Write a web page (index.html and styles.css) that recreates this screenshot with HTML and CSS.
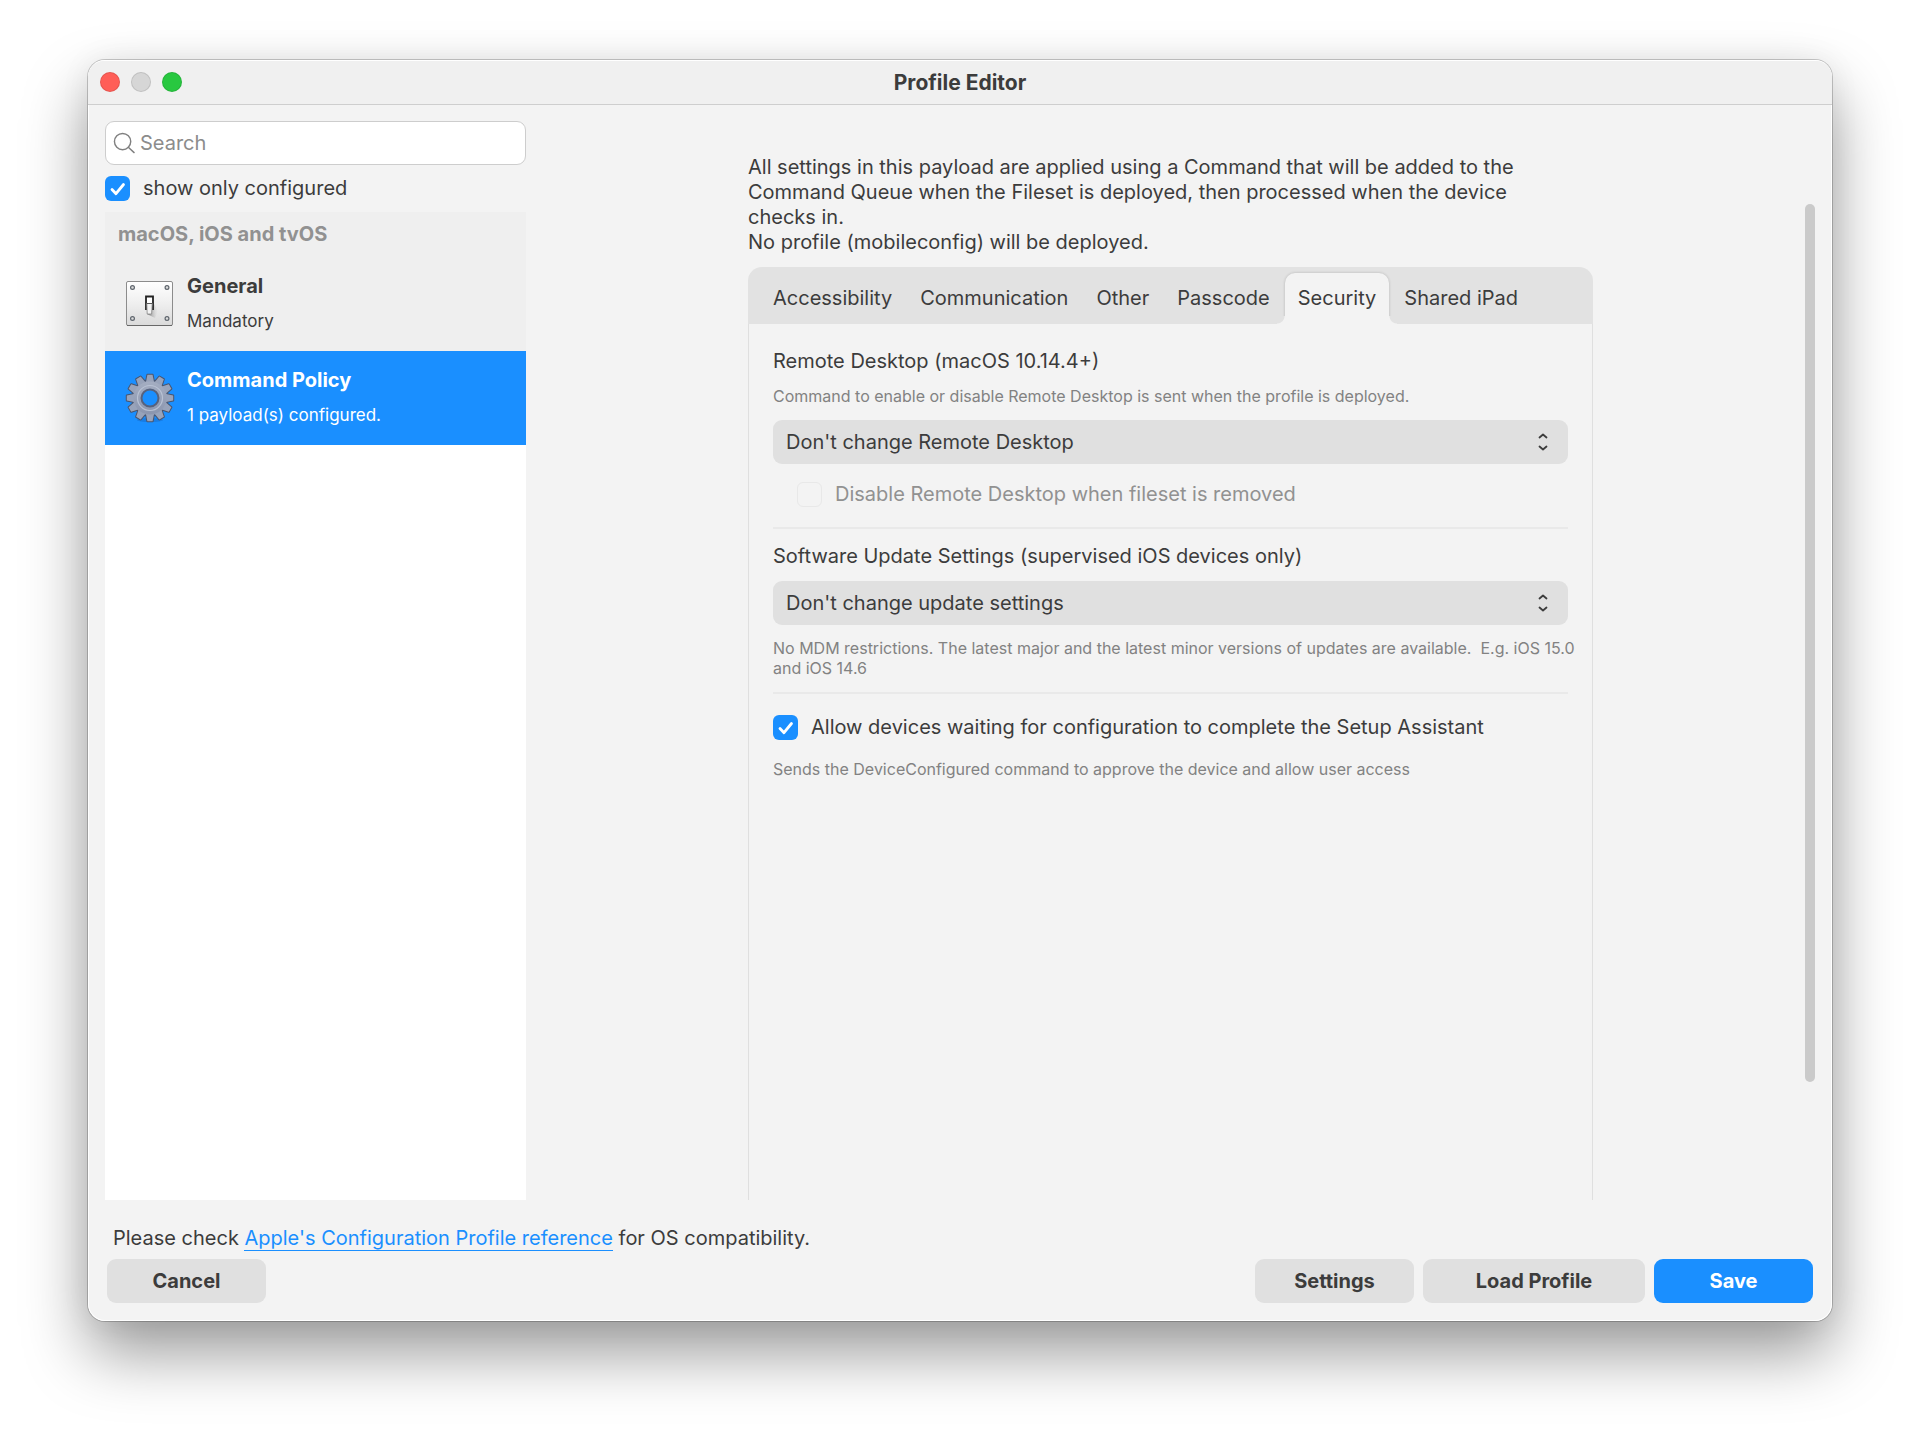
FILE: index.html
```html
<!DOCTYPE html>
<html lang="en">
<head>
<meta charset="utf-8">
<meta name="viewport" content="width=device-width, initial-scale=1">
<title>Profile Editor</title>
<link rel="stylesheet" href="styles.css">
</head>
<body>
<div class="window">
  <header class="titlebar">
    <div class="lights">
      <button class="light light-close" type="button" aria-label="Close"></button>
      <button class="light light-min" type="button" aria-label="Minimize" disabled></button>
      <button class="light light-zoom" type="button" aria-label="Zoom"></button>
    </div>
    <h1 class="title">Profile Editor</h1>
  </header>

  <div class="body">
    <aside class="sidebar">
      <div class="search">
        <svg class="search-icon" viewBox="0 0 24 24" aria-hidden="true"><circle cx="10" cy="10" r="8.500"/><path d="M16 16l6 5.500"/></svg>
        <input class="search-input" type="search" placeholder="Search" aria-label="Search">
      </div>
      <label class="check"><input class="checkbox" type="checkbox" checked><span>show only configured</span></label>
      <div class="list">
        <h2 class="group">macOS, iOS and tvOS</h2>
        <ul class="items">
          <li class="item">
            <svg class="item-icon" viewBox="0 0 50 50" aria-hidden="true">
              <defs>
                <linearGradient id="plate" x1="0" y1="0" x2="0" y2="1"><stop offset="0" stop-color="#fff"/><stop offset=".5" stop-color="#efefef"/><stop offset="1" stop-color="#dadada"/></linearGradient>
                <linearGradient id="shade" x1="0" y1="0" x2="1" y2="0"><stop offset="0" stop-color="#666"/><stop offset="1" stop-color="#ccc" stop-opacity="0"/></linearGradient>
              </defs>
              <rect x="1.500" y="2.500" width="46" height="44" rx="1.500" fill="url(#plate)" stroke="#8c8c8c"/>
              <path d="M2 46.500h45" stroke="#686868"/>
              <path d="M22 35l6-12 5 9-3 7z" fill="url(#shade)"/>
              <path d="M21 31V17.500h7V31" fill="#fff" stroke="#222" stroke-width="1.800"/>
              <path d="M21.800 24.500h5.400l-.6 10.500h-4.400z" fill="#f2f2f2" stroke="#888" stroke-width=".8"/>
              <path d="M22 24.500h5" stroke="#555"/>
              <g fill="#ddd" stroke="#5d646c" stroke-width="1.200"><circle cx="7.500" cy="8.500" r="1.900"/><circle cx="42" cy="8.500" r="1.900"/><circle cx="7.500" cy="39.500" r="1.900"/><circle cx="42" cy="39.500" r="1.900"/></g>
            </svg>
            <div class="item-text"><strong class="item-name">General</strong><span class="item-note">Mandatory</span></div>
          </li>
          <li class="item item-selected" aria-current="true">
            <svg class="item-icon" viewBox="0 0 50 50" aria-hidden="true">
              <defs>
                <linearGradient id="metal" gradientUnits="userSpaceOnUse" x1="0" y1="-24" x2="0" y2="24"><stop offset="0" stop-color="#aab3c6"/><stop offset="1" stop-color="#8590aa"/></linearGradient>
                <path id="tooth" d="M-4-16L-2.600-23.200H2.600L4-16z"/>
                <g id="gear">
                  <circle r="17"/>
                  <use href="#tooth"/><use href="#tooth" transform="rotate(30)"/><use href="#tooth" transform="rotate(60)"/><use href="#tooth" transform="rotate(90)"/>
                  <use href="#tooth" transform="rotate(120)"/><use href="#tooth" transform="rotate(150)"/><use href="#tooth" transform="rotate(180)"/><use href="#tooth" transform="rotate(210)"/>
                  <use href="#tooth" transform="rotate(240)"/><use href="#tooth" transform="rotate(270)"/><use href="#tooth" transform="rotate(300)"/><use href="#tooth" transform="rotate(330)"/>
                </g>
              </defs>
              <ellipse cx="25" cy="47" rx="13" ry="2" fill="#1569c7" opacity=".5"/>
              <g transform="translate(25 25)">
                <use href="#gear" fill="#4a546c" stroke="#4a546c" stroke-width="2" stroke-linejoin="round"/>
                <use href="#gear" fill="#98a3ba"/>
                <circle r="16.500" fill="url(#metal)"/>
                <circle r="12.500" fill="none" stroke="#b9c2d4" stroke-width="1.200"/>
                <circle r="8.500" fill="#1a8fff" stroke="#56627e" stroke-width="2"/>
              </g>
            </svg>
            <div class="item-text"><strong class="item-name">Command Policy</strong><span class="item-note">1 payload(s) configured.</span></div>
          </li>
        </ul>
      </div>
    </aside>

    <main class="main">
      <div class="payload">
        <p class="intro">All settings in this payload are applied using a Command that will be added to the Command Queue when the Fileset is deployed, then processed when the device checks in.<br>No profile (mobileconfig) will be deployed.</p>
        <div class="tabs" role="tablist">
          <button class="tab" type="button" role="tab">Accessibility</button>
          <button class="tab" type="button" role="tab">Communication</button>
          <button class="tab" type="button" role="tab">Other</button>
          <button class="tab" type="button" role="tab">Passcode</button>
          <button class="tab tab-active" type="button" role="tab" aria-selected="true">Security</button>
          <button class="tab" type="button" role="tab">Shared iPad</button>
        </div>
        <div class="panel" role="tabpanel">
          <section class="section">
            <label class="label" for="remote">Remote Desktop (macOS 10.14.4+)</label>
            <p class="hint">Command to enable or disable Remote Desktop is sent when the profile is deployed.</p>
            <div class="select-wrap">
              <select class="select" id="remote"><option>Don't change Remote Desktop</option></select>
              <svg class="chevrons" viewBox="0 0 10 18" aria-hidden="true"><path d="M1.500 4.500l3.500-3 3.500 3M1.500 13.500l3.500 3 3.500-3"/></svg>
            </div>
            <label class="check check-disabled"><input class="checkbox" type="checkbox" disabled><span>Disable Remote Desktop when fileset is removed</span></label>
          </section>
          <section class="section">
            <label class="label" for="updates">Software Update Settings (supervised iOS devices only)</label>
            <div class="select-wrap">
              <select class="select" id="updates"><option>Don't change update settings</option></select>
              <svg class="chevrons" viewBox="0 0 10 18" aria-hidden="true"><path d="M1.500 4.500l3.500-3 3.500 3M1.500 13.500l3.500 3 3.500-3"/></svg>
            </div>
            <p class="hint hint-after">No MDM restrictions. The latest major and the latest minor versions of updates are available.&nbsp; E.g. iOS 15.0 and iOS 14.6</p>
          </section>
          <section class="section section-setup">
            <label class="check"><input class="checkbox" type="checkbox" checked><span>Allow devices waiting for configuration to complete the Setup Assistant</span></label>
            <p class="hint">Sends the DeviceConfigured command to approve the device and allow user access</p>
          </section>
        </div>
      </div>
      <div class="scrollbar"></div>
    </main>
  </div>

  <footer class="footer">
    <p class="note">Please check <a class="link" href="#reference">Apple's Configuration Profile reference</a> for OS compatibility.</p>
    <div class="actions">
      <button class="button button-cancel" type="button">Cancel</button>
      <button class="button" type="button">Settings</button>
      <button class="button button-wide" type="button">Load Profile</button>
      <button class="button button-primary" type="button">Save</button>
    </div>
  </footer>
</div>
</body>
</html>
```
FILE: styles.css
```css
*, *::before, *::after { box-sizing: border-box; }

body {
  margin: 0;
  min-height: 100vh;
  display: flex;
  padding: 60px 88px 117px;
  background: #fff;
  color: #3c3c3c;
  font: 20px/25px Inter, "Liberation Sans", sans-serif;
}

h1, h2, p, ul { margin: 0; padding: 0; font-size: inherit; }
button, input, select { font: inherit; color: inherit; }

.window {
  flex: 1;
  min-width: 0;
  display: flex;
  flex-direction: column;
  border-radius: 17px;
  background: #f3f3f3;
  box-shadow: inset 0 0 0 1px #fff, 0 0 0 1px rgba(0, 0, 0, .2), 0 32px 64px rgba(0, 0, 0, .4), 0 0 32px rgba(0, 0, 0, .06);
}

/* Title bar */
.titlebar {
  display: grid;
  grid-template-columns: 1fr auto 1fr;
  align-items: center;
  height: 44px;
  margin-top: 1px;
  padding: 0 12px 1px;
  border-bottom: 1px solid #cecece;
  border-radius: 16px 16px 0 0;
  background: #f0f0f0;
}
.lights { display: flex; gap: 11px; }
.light {
  width: 20px;
  height: 20px;
  padding: 0;
  border: 1px solid rgba(0, 0, 0, .1);
  border-radius: 50%;
}
.light-close { background: #ff5e57; }
.light-min { background: #d6d6d6; }
.light-zoom { background: #28c840; }
.title { font-size: 21px; font-weight: 700; }

/* Body */
.body {
  flex: 1;
  display: flex;
  padding: 16px 17px 0;
}
.sidebar {
  flex: 0 0 421px;
  display: flex;
  flex-direction: column;
}
.search {
  display: flex;
  align-items: center;
  gap: 4px;
  height: 44px;
  padding: 0 7px;
  border: 1px solid #cdcdcd;
  border-radius: 9px;
  background: #fff;
}
.search-icon {
  width: 23px;
  height: 23px;
  fill: none;
  stroke: #808080;
  stroke-width: 1.5;
  stroke-linecap: round;
}
.search-input {
  flex: 1;
  min-width: 0;
  padding: 0;
  border: 0;
  outline: 0;
  background: none;
  appearance: none;
}
.search-input::placeholder { color: #8c8c8c; opacity: 1; }

.check { display: flex; align-items: center; gap: 13px; }
.sidebar .check { margin: 11px 0; }
.checkbox {
  flex: none;
  width: 25px;
  height: 25px;
  margin: 0;
  border: 1px solid #e8e8e8;
  border-radius: 6px;
  appearance: none;
}
.checkbox:checked {
  border: 0;
  background: #1a8fff url("data:image/svg+xml,%3Csvg xmlns='http://www.w3.org/2000/svg' viewBox='0 0 25 25'%3E%3Cpath d='M7 13.500l4 4.200 7.500-9.200' fill='none' stroke='white' stroke-width='2.800' stroke-linecap='round' stroke-linejoin='round'/%3E%3C/svg%3E");
}

.list { flex: 1; background: #fff; }
.group {
  padding: 10px 13px;
  background: #efefef;
  color: #919191;
  font-weight: 700;
}
.items { list-style: none; }
.item {
  display: flex;
  align-items: center;
  gap: 12px;
  height: 94px;
  padding: 0 20px;
  background: #efefef;
}
.item-selected { background: #1a8fff; color: #fff; }
.item-icon { width: 50px; height: 50px; }
.item-text { display: flex; flex-direction: column; gap: 10px; }
.item-name { font-weight: 700; }
.item-note { font-size: 17px; }

/* Payload */
.main {
  position: relative;
  flex: 1;
  min-width: 0;
  display: flex;
  justify-content: center;
}
.payload {
  flex: 0 1 845px;
  display: flex;
  flex-direction: column;
  padding-top: 34px;
}
.intro { margin-bottom: 12px; padding-right: 40px; }
.tabs {
  display: flex;
  gap: 2px;
  padding: 6px 12px 0;
  border-radius: 14px 14px 0 0;
  background: #e2e2e2;
}
.tab {
  height: 51px;
  padding: 0 13px;
  border: 0;
  background: none;
}
.tab-active {
  position: relative;
  border-radius: 10px 10px 0 0;
  background: #f3f3f3;
  box-shadow: 0 0 3px rgba(0, 0, 0, .2);
  clip-path: inset(-4px -8px 0 -8px);
}
/* Flared feet that join the active tab to the panel */
.tab-active::before, .tab-active::after {
  content: "";
  position: absolute;
  bottom: 0;
  width: 8px;
  height: 8px;
}
.tab-active::before {
  right: 100%;
  background: radial-gradient(circle at 0 0, #e2e2e2 7px, #f3f3f3 8px);
}
.tab-active::after {
  left: 100%;
  background: radial-gradient(circle at 100% 0, #e2e2e2 7px, #f3f3f3 8px);
}
.panel {
  flex: 1;
  padding: 25px 24px 0;
  border: solid #dfdfdf;
  border-width: 0 1px;
}
.section { display: flex; flex-direction: column; }
.section + .section {
  margin-top: 20px;
  padding-top: 15px;
  border-top: 2px solid #e9e9e9;
}
.label { margin-bottom: 12px; }
.hint {
  margin-right: -16px;
  color: #828282;
  font-size: 16px;
  line-height: 20px;
}
.select-wrap { position: relative; display: flex; }
.hint + .select-wrap { margin-top: 14px; }
.select {
  flex: 1;
  height: 44px;
  padding: 0 40px 0 13px;
  border: 0;
  border-radius: 9px;
  background: #e0e0e0;
  appearance: none;
}
.chevrons {
  position: absolute;
  top: 13px;
  right: 20px;
  width: 10px;
  height: 18px;
  fill: none;
  stroke: #3c3c3c;
  stroke-width: 1.8;
  stroke-linecap: round;
  stroke-linejoin: round;
  pointer-events: none;
}
.check-disabled { margin: 18px 0 0 24px; color: #919191; }
.hint-after { margin-top: 13px; }
.section.section-setup { margin-top: 14px; padding-top: 21px; }
.section-setup .hint { margin-top: 19px; }

.scrollbar {
  position: absolute;
  top: 83px;
  right: 0;
  bottom: 118px;
  width: 10px;
  border-radius: 5px;
  background: #cacaca;
}

/* Footer */
.footer { padding: 26px 19px 18px; }
.note { margin: 0 6px 8px; }
.link {
  color: #1a8fff;
  text-decoration: none;
  border-bottom: 1px solid #1a8fff;
}
.actions { display: flex; gap: 9px; }
.button {
  width: 159px;
  height: 44px;
  border: 0;
  border-radius: 9px;
  background: #e0e0e0;
  font-weight: 700;
}
.button-cancel { margin-right: auto; }
.button-wide { width: 222px; }
.button-primary { background: #1a8fff; color: #fff; }
```
